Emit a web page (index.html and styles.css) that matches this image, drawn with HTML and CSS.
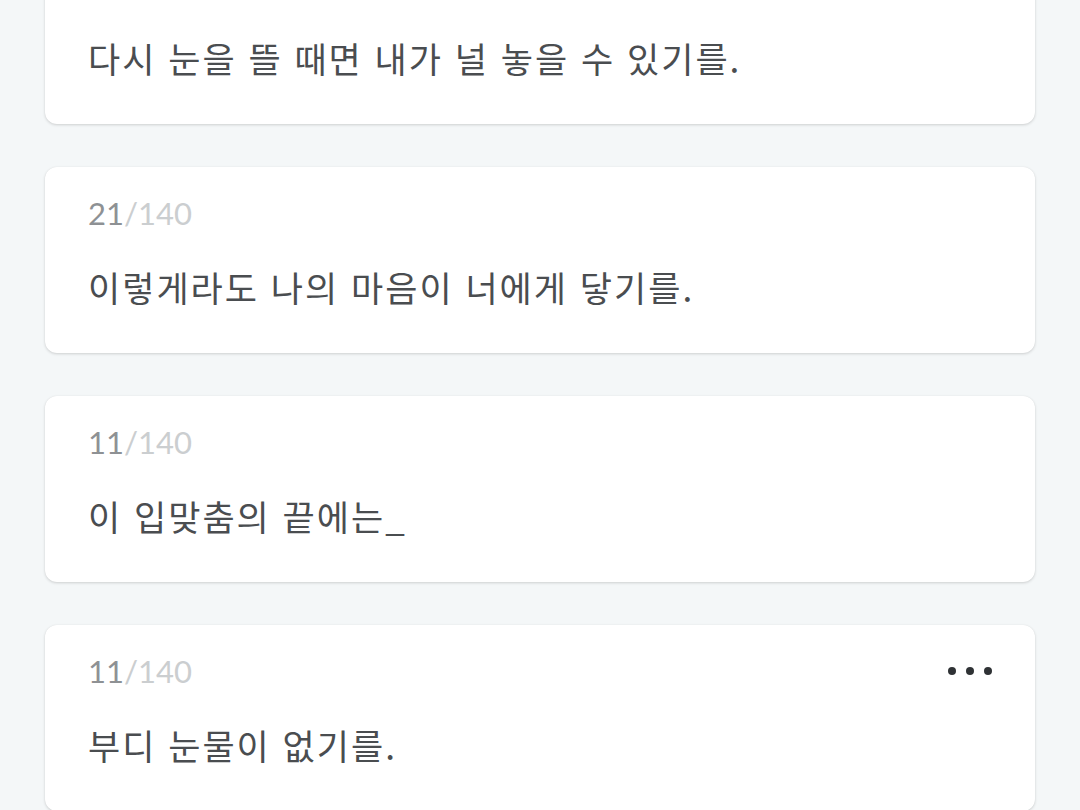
FILE: index.html
```html
<!DOCTYPE html>
<html lang="ko">
<head>
<meta charset="utf-8">
<link rel="stylesheet" href="styles.css">
</head>
<body>
<main class="list">
  <section class="card">
    <div class="head"><span class="count"><span class="cur">24</span><span class="max">/140</span></span></div>
    <p class="text">다시 눈을 뜰 때면 내가 널 놓을 수 있기를.</p>
  </section>
  <section class="card">
    <div class="head"><span class="count"><span class="cur">21</span><span class="max">/140</span></span></div>
    <p class="text">이렇게라도 나의 마음이 너에게 닿기를.</p>
  </section>
  <section class="card">
    <div class="head"><span class="count"><span class="cur">11</span><span class="max">/140</span></span></div>
    <p class="text">이 입맞춤의 끝에는_</p>
  </section>
  <section class="card">
    <div class="head">
      <span class="count"><span class="cur">11</span><span class="max">/140</span></span>
      <span class="more"><i></i><i></i><i></i></span>
    </div>
    <p class="text">부디 눈물이 없기를.</p>
  </section>
</main>
</body>
</html>
```
FILE: styles.css
```css
html, body {
  margin: 0;
  padding: 0;
  background: #f4f7f8;
  overflow: hidden;
}
body {
  font-family: "Noto Sans CJK KR", "Noto Sans", sans-serif;
}
.list {
  display: flex;
  flex-direction: column;
  gap: 43px;
  padding: 0 45px;
  margin-top: -62px;
}
.card {
  background: #ffffff;
  border-radius: 12px;
  box-shadow: 0 1px 3px rgba(0, 0, 0, 0.16), 0 0 1px rgba(0, 0, 0, 0.06);
  padding: 26px 43px 41px;
  display: flex;
  flex-direction: column;
  gap: 29px;
}
.head {
  display: flex;
  align-items: center;
  justify-content: space-between;
  height: 40px;
}
.count {
  font-family: Lato, "Noto Sans", sans-serif;
  font-size: 31px;
  font-weight: 400;
  line-height: 40px;
}
.cur { color: #8e9194; }
.max { color: #cbced0; }
.text {
  margin: 0;
  font-size: 35px;
  line-height: 50px;
  letter-spacing: 2px;
  color: #4a4d50;
}
.more {
  display: flex;
  gap: 10px;
}
.more i {
  width: 8px;
  height: 8px;
  border-radius: 50%;
  background: #2f3235;
}
```
